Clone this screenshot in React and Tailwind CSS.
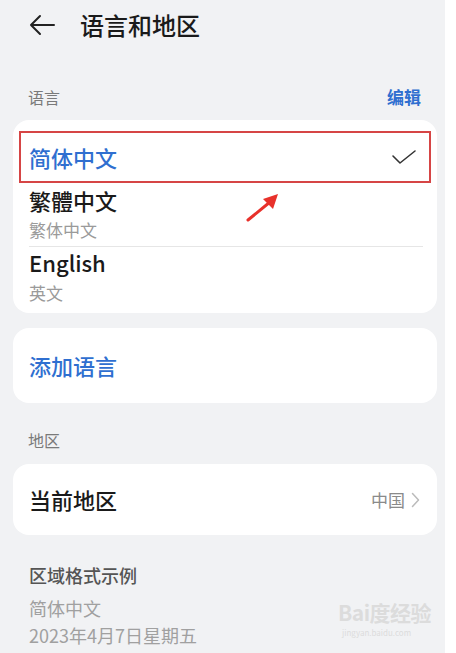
import React from 'react';

const font = { fontFamily: '"Noto Sans CJK SC", "Noto Sans", sans-serif' };

const Arrow = () => (
  <svg className="absolute left-[244px] top-[190px]" width="38" height="34" viewBox="0 0 38 34">
    <path d="M4 30 L26 12" stroke="#e8312b" strokeWidth="3" strokeLinecap="round" />
    <path d="M34 4 L19 9 L29 19 Z" fill="#e8312b" />
  </svg>
);

export default function App() {
  return (
    <div className="flex w-[456px] h-[653px] bg-white overflow-hidden" style={font}>
      <div className="relative w-[445px] h-full bg-[#f1f2f4]">
        {/* header */}
        <div className="flex items-center h-[50px] pl-[28px]">
          <svg width="28" height="22" viewBox="0 0 28 22" className="mr-[24px]">
            <path d="M26 11 H3 M12 2 L3 11 L12 20" stroke="#222" strokeWidth="2" fill="none" strokeLinecap="round" strokeLinejoin="round" />
          </svg>
          <span className="text-[24px] leading-none font-medium text-[#1a1a1a]">语言和地区</span>
        </div>

        {/* language label */}
        <div className="flex justify-between items-center mt-[33px] px-[28px] h-[28px]">
          <span className="text-[16px] text-[#7a7a7a]">语言</span>
          <span className="text-[17px] font-bold text-[#2f6fd0] mr-[-4px]">编辑</span>
        </div>

        {/* language card */}
        <div className="mx-[13px] mt-[9px] w-[424px] h-[193px] bg-white rounded-[16px] pt-[11px] px-[6px]">
          <div className="flex items-center justify-between h-[52px] border-2 border-[#d64545] pl-[8px] pr-[12px]">
            <span className="text-[22px] font-medium text-[#2f6fd0] leading-none">简体中文</span>
            <svg width="26" height="16" viewBox="0 0 26 16">
              <path d="M2 7 L9 14 L24 2" stroke="#333" strokeWidth="1.6" fill="none" strokeLinecap="round" strokeLinejoin="round" />
            </svg>
          </div>
          <div className="pl-[10px] pr-[8px]">
            <div className="border-b border-[#e6e6e6] pt-[3px] pb-[3px]">
              <div className="text-[22px] font-medium text-[#1a1a1a] leading-[29px]">繁體中文</div>
              <div className="text-[17px] text-[#9a9a9a] leading-[26px] mt-[2px]">繁体中文</div>
            </div>
            <div className="pt-[1px]">
              <div className="text-[22px] font-medium text-[#1a1a1a] leading-[29px]">English</div>
              <div className="text-[17px] text-[#9a9a9a] leading-[26px] mt-[3px]">英文</div>
            </div>
          </div>
        </div>

        {/* add language */}
        <div className="mx-[13px] mt-[15px] w-[424px] h-[75px] bg-white rounded-[16px] flex items-center px-[16px]">
          <span className="text-[22px] font-medium text-[#2f6fd0]">添加语言</span>
        </div>

        {/* region */}
        <div className="px-[28px] mt-[25px] text-[16px] text-[#7a7a7a] leading-[24px]">地区</div>
        <div className="mx-[13px] mt-[12px] w-[424px] h-[71px] bg-white rounded-[16px] flex items-center justify-between pl-[16px] pr-[17px]">
          <span className="text-[22px] font-medium text-[#1a1a1a]">当前地区</span>
          <div className="flex items-center gap-[6px]">
            <span className="text-[17px] text-[#8a8a8a]">中国</span>
            <svg width="9" height="16" viewBox="0 0 9 16">
              <path d="M1.5 1.5 L7.5 8 L1.5 14.5" stroke="#bbb" strokeWidth="1.5" fill="none" strokeLinecap="round" strokeLinejoin="round" />
            </svg>
          </div>
        </div>

        {/* format example */}
        <div className="px-[29px] mt-[26px]">
          <div className="text-[18px] font-medium text-[#555] leading-[28px]">区域格式示例</div>
          <div className="text-[18px] text-[#a0a0a0] leading-[27px] mt-[6px]">简体中文</div>
          <div className="text-[18px] text-[#a0a0a0] leading-[27px]">2023年4月7日星期五</div>
        </div>

        {/* watermark */}
        <div className="absolute left-[338px] top-[600px] flex flex-col text-[#dcdcdc]">
          <span className="text-[21px] font-bold tracking-tight leading-[24px]">Bai度经验</span>
          <span className="text-[8px] leading-[10px] mt-[4px] pl-[4px]">jingyan.baidu.com</span>
        </div>

        <Arrow />
      </div>
    </div>
  );
}
